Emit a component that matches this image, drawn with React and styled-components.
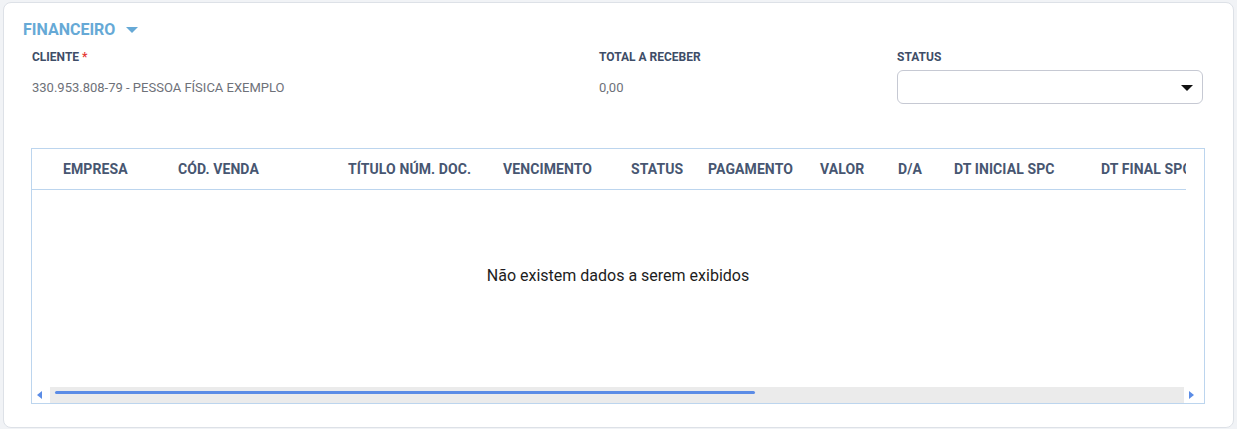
import React from "react";
import styled, { createGlobalStyle } from "styled-components";

const Global = createGlobalStyle`
  html, body { margin: 0; padding: 0; background: #f1f3f6; }
  body { font-family: Roboto, "Liberation Sans", Arial, sans-serif; }
  * { box-sizing: border-box; }
`;

const Card = styled.section`
  margin: 2px 3px 0 3px;
  height: 426px;
  background: #fff;
  border: 1px solid #dde1e7;
  border-radius: 8px;
  padding: 16px 0 0 19px;
`;

const Title = styled.div`
  display: flex;
  align-items: center;
  gap: 11px;
  height: 20px;
  color: #66a9d6;
  font-size: 16px;
  font-weight: 700;
  text-transform: uppercase;
`;

const Caret = styled.span`
  width: 0;
  height: 0;
  border-left: 6px solid transparent;
  border-right: 6px solid transparent;
  border-top: 6px solid ${(p) => p.$color || "#66a9d6"};
  margin-top: 2px;
`;

const Fields = styled.div`
  display: grid;
  grid-template-columns: 567px 298px 306px;
  margin: 10px 0 0 9px;
`;

const Field = styled.div`
  display: flex;
  flex-direction: column;
`;

const Label = styled.div`
  font-size: 12px;
  line-height: 16px;
  font-weight: 700;
  color: #3e4d67;
  text-transform: uppercase;
`;

const Required = styled.span`
  color: #e53935;
  margin-left: 3px;
`;

const Value = styled.div`
  height: 34px;
  margin-top: 5px;
  display: flex;
  align-items: center;
  font-size: 13px;
  color: #6e7179;
`;

const Select = styled.div`
  height: 34px;
  margin-top: 5px;
  border: 1px solid #c6c9d3;
  border-radius: 6px;
  display: flex;
  align-items: center;
  justify-content: flex-end;
  padding-right: 9px;
`;

const Table = styled.div`
  margin: 44px 0 0 8px;
  width: 1174px;
  border: 1px solid #bcd5ee;
  display: flex;
  flex-direction: column;
`;

const HeaderViewport = styled.div`
  width: calc(100% - 18px);
  overflow: hidden;
  border-bottom: 1px solid #bcd5ee;
`;

const HeaderRow = styled.div`
  display: flex;
  height: 40px;
  align-items: center;
  padding-left: 31px;
  width: max-content;
`;

const HeadCell = styled.div`
  flex: 0 0 ${(p) => p.$w}px;
  font-size: 14px;
  font-weight: 700;
  letter-spacing: 0.1px;
  color: #475671;
  white-space: nowrap;
  text-transform: uppercase;
`;

const Body = styled.div`
  height: 197px;
  padding-top: 76px;
  text-align: center;
  font-size: 16px;
  line-height: 19px;
  color: #1d1d1d;
`;

const Scrollbar = styled.div`
  display: flex;
  height: 16px;
  align-items: stretch;
`;

const ArrowBox = styled.div`
  flex: 0 0 ${(p) => p.$w}px;
  display: flex;
  align-items: center;
  justify-content: center;
  background: #fff;
`;

const ArrowLeft = styled.span`
  width: 0;
  height: 0;
  border-top: 4px solid transparent;
  border-bottom: 4px solid transparent;
  border-right: 5px solid #5b8ce6;
  margin-right: 4px;
`;

const ArrowRight = styled.span`
  width: 0;
  height: 0;
  border-top: 4px solid transparent;
  border-bottom: 4px solid transparent;
  border-left: 5px solid #5b8ce6;
  margin-right: 6px;
`;

const Track = styled.div`
  flex: 1;
  background: #ebebeb;
  padding: 4px 0 0 5px;
`;

const Thumb = styled.div`
  width: 700px;
  height: 3px;
  border-radius: 2px;
  background: #5b8ce6;
`;

const columns = [
  ["Empresa", 115],
  ["Cód. Venda", 170],
  ["Título Núm. Doc.", 155],
  ["Vencimento", 128],
  ["Status", 77],
  ["Pagamento", 112],
  ["Valor", 78],
  ["D/A", 56],
  ["Dt Inicial SPC", 147],
  ["Dt Final SPC", 150],
];

export default function App() {
  return (
    <>
      <Global />
      <Card>
        <Title>
          Financeiro
          <Caret />
        </Title>
        <Fields>
          <Field>
            <Label>
              Cliente<Required>*</Required>
            </Label>
            <Value>330.953.808-79 - PESSOA FÍSICA EXEMPLO</Value>
          </Field>
          <Field>
            <Label>Total a receber</Label>
            <Value>0,00</Value>
          </Field>
          <Field>
            <Label>Status</Label>
            <Select>
              <Caret $color="#111" />
            </Select>
          </Field>
        </Fields>
        <Table>
          <HeaderViewport>
            <HeaderRow>
              {columns.map(([name, w]) => (
                <HeadCell key={name} $w={w}>
                  {name}
                </HeadCell>
              ))}
            </HeaderRow>
          </HeaderViewport>
          <Body>Não existem dados a serem exibidos</Body>
          <Scrollbar>
            <ArrowBox $w={18}>
              <ArrowLeft />
            </ArrowBox>
            <Track>
              <Thumb />
            </Track>
            <ArrowBox $w={20}>
              <ArrowRight />
            </ArrowBox>
          </Scrollbar>
        </Table>
      </Card>
    </>
  );
}
